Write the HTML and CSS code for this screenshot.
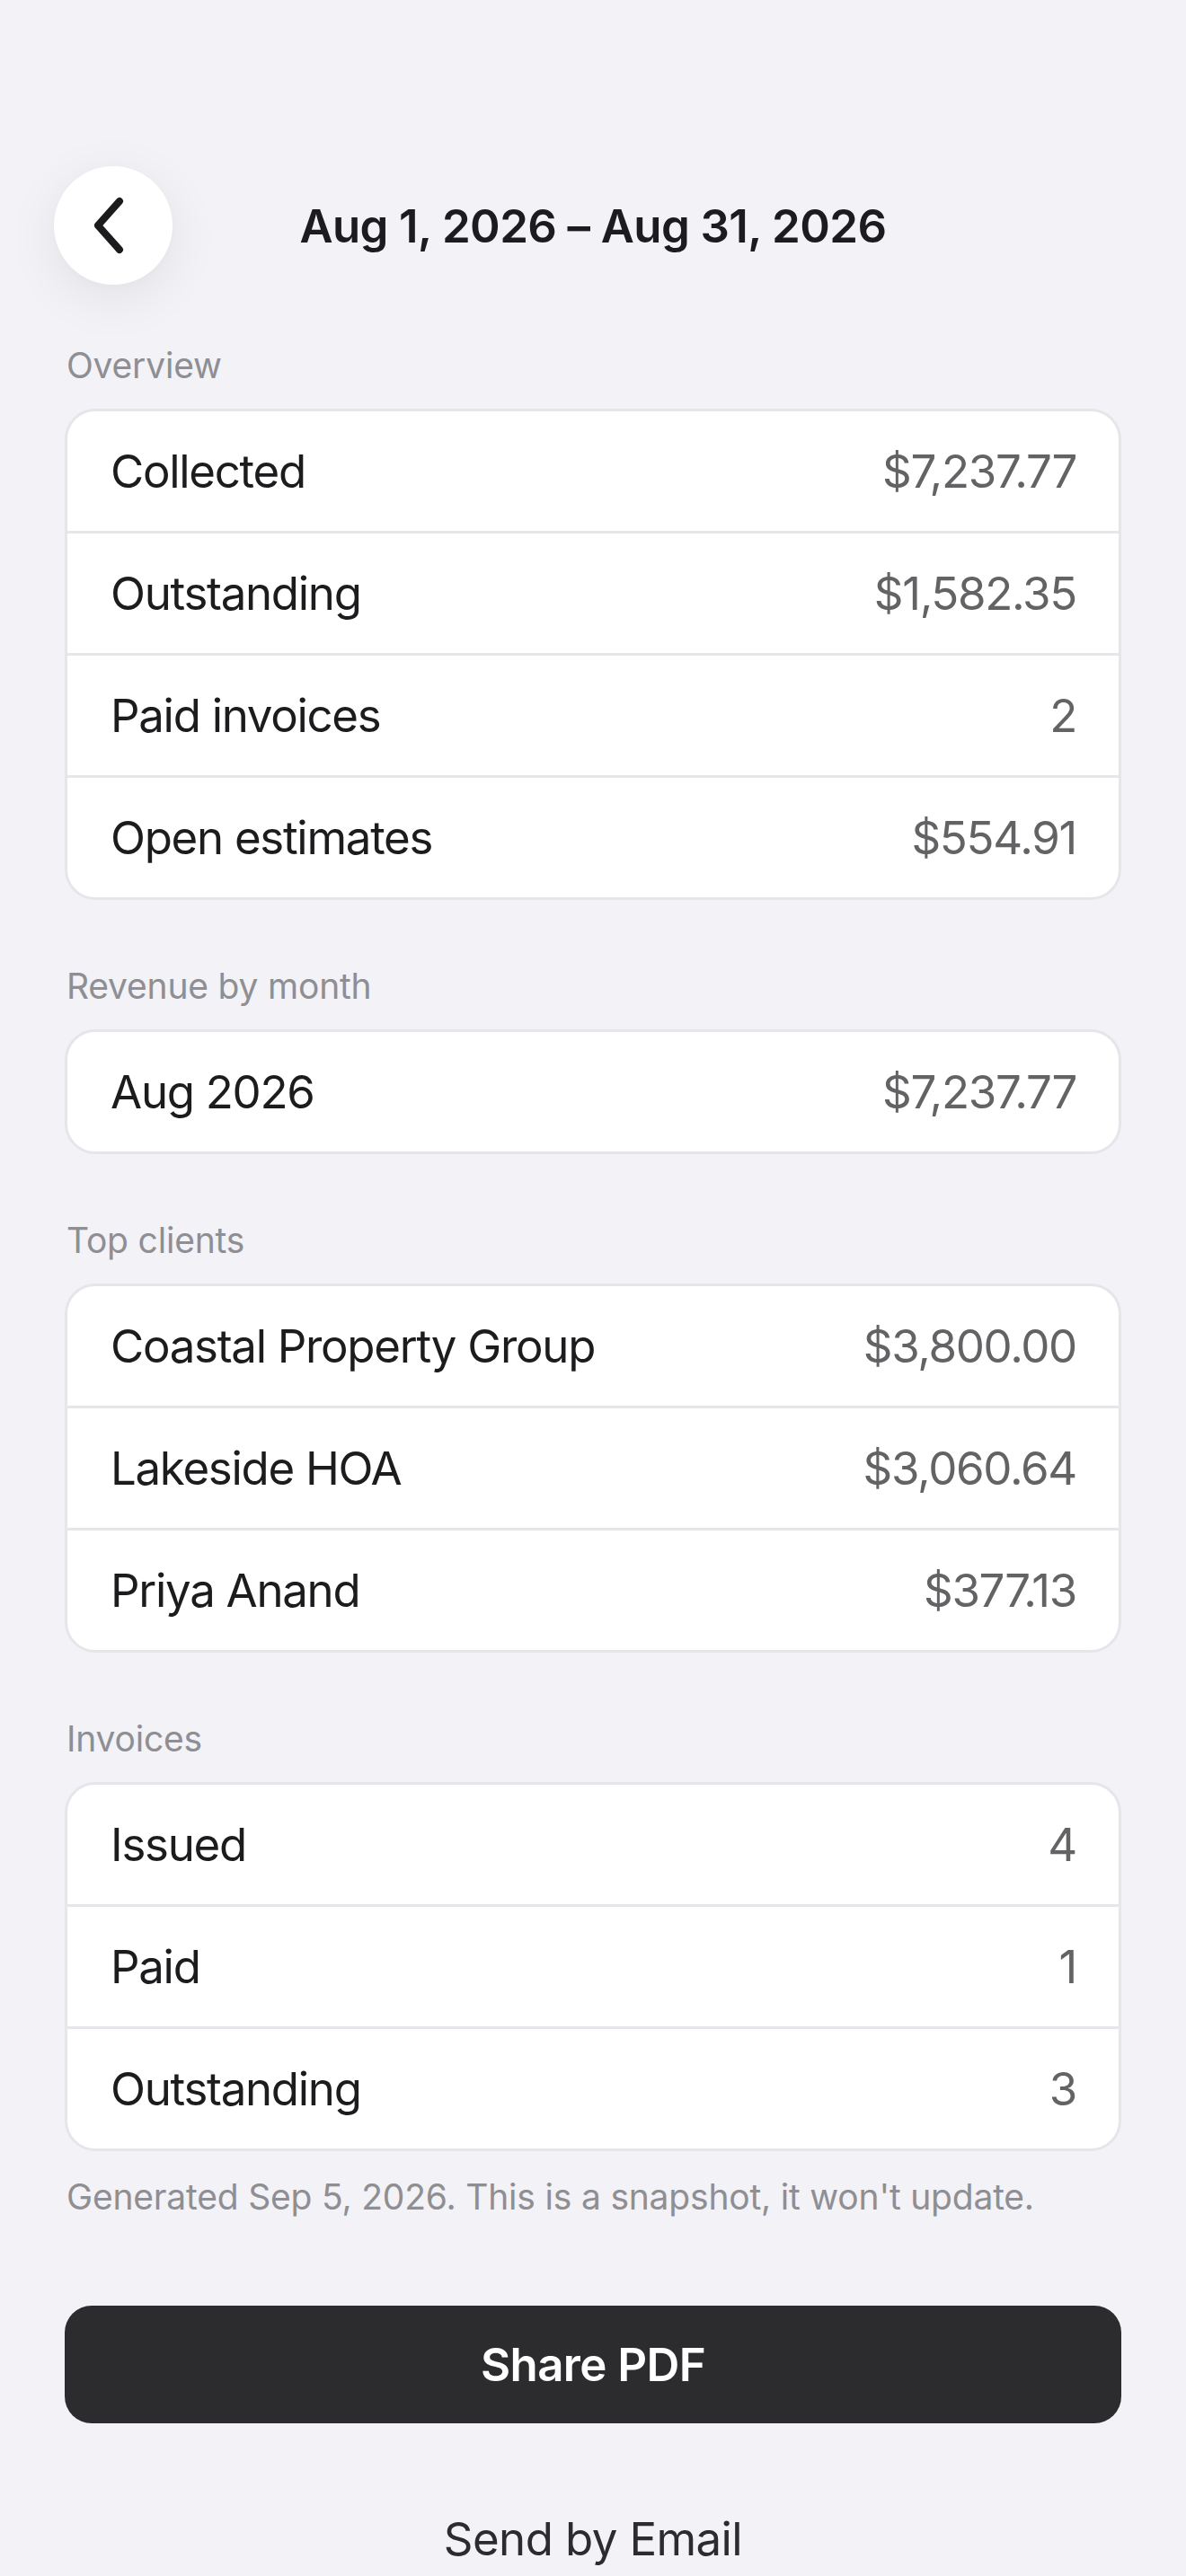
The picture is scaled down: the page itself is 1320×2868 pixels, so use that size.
FILE: index.html
```html
<!DOCTYPE html>
<html lang="en">
<head>
<meta charset="utf-8">
<title>Report</title>
<link rel="stylesheet" href="styles.css">
</head>
<body>
<div class="page">
  <header class="header">
    <button class="back" aria-label="Back">
      <svg width="40" height="64" viewBox="0 0 40 64" fill="none">
        <path d="M30 5 L6 32 L30 59" stroke="#1c1c1e" stroke-width="8" stroke-linecap="round" stroke-linejoin="round"/>
      </svg>
    </button>
    <h1 class="title">Aug 1, 2026 – Aug 31, 2026</h1>
    <div class="spacer"></div>
  </header>

  <section class="section first">
    <div class="label">Overview</div>
    <div class="card">
      <div class="row"><span class="k">Collected</span><span class="v">$7,237.77</span></div>
      <div class="row"><span class="k">Outstanding</span><span class="v">$1,582.35</span></div>
      <div class="row"><span class="k">Paid invoices</span><span class="v">2</span></div>
      <div class="row"><span class="k">Open estimates</span><span class="v">$554.91</span></div>
    </div>
  </section>

  <section class="section">
    <div class="label">Revenue by month</div>
    <div class="card">
      <div class="row"><span class="k">Aug 2026</span><span class="v">$7,237.77</span></div>
    </div>
  </section>

  <section class="section">
    <div class="label">Top clients</div>
    <div class="card">
      <div class="row"><span class="k">Coastal Property Group</span><span class="v">$3,800.00</span></div>
      <div class="row"><span class="k">Lakeside HOA</span><span class="v">$3,060.64</span></div>
      <div class="row"><span class="k">Priya Anand</span><span class="v">$377.13</span></div>
    </div>
  </section>

  <section class="section">
    <div class="label">Invoices</div>
    <div class="card">
      <div class="row"><span class="k">Issued</span><span class="v">4</span></div>
      <div class="row"><span class="k">Paid</span><span class="v">1</span></div>
      <div class="row"><span class="k">Outstanding</span><span class="v">3</span></div>
    </div>
    <p class="note">Generated Sep 5, 2026. This is a snapshot, it won't update.</p>
  </section>

  <div class="actions">
    <button class="primary">Share PDF</button>
    <button class="secondary">Send by Email</button>
  </div>
</div>
</body>
</html>
```
FILE: styles.css
```css
* { box-sizing: border-box; }
html, body {
  margin: 0;
  padding: 0;
  background: #f2f2f7;
}
body {
  font-family: Inter, "Noto Sans", "Liberation Sans", sans-serif;
  color: #1c1c1e;
  -webkit-font-smoothing: antialiased;
}
.page {
  padding: 185px 72px 0 72px;
}
.header {
  display: grid;
  grid-template-columns: 132px 1fr 132px;
  align-items: center;
  margin: 0 -12px;
  height: 132px;
}
.back {
  width: 132px;
  height: 132px;
  border-radius: 50%;
  border: none;
  background: #ffffff;
  box-shadow: 0 14px 60px rgba(0, 0, 0, 0.075), 0 2px 10px rgba(0, 0, 0, 0.02);
  display: flex;
  align-items: center;
  justify-content: center;
  padding: 0 6px 0 0;
}
.title {
  margin: 0;
  text-align: center;
  font-size: 51px;
  font-weight: 600;
  letter-spacing: -0.6px;
  color: #1c1c1e;
}
.section { margin-top: 72px; }
.section.first { margin-top: 66px; }
.label {
  font-size: 39px;
  color: #8e8e93;
  padding-left: 2px;
  margin-bottom: 25px;
  letter-spacing: -0.2px;
}
.card {
  background: #ffffff;
  border: 3px solid #e5e5ea;
  border-radius: 34px;
  overflow: hidden;
}
.row {
  display: flex;
  justify-content: space-between;
  align-items: center;
  height: 136px;
  padding: 0 47px 0 48px;
  border-top: 3px solid #e5e5ea;
  font-size: 51px;
  letter-spacing: -1.3px;
}
.row:first-child {
  border-top: none;
  height: 133px;
}
.k { color: #1c1c1e; }
.v { color: #636366; }
.note {
  margin: 27px 0 0 0;
  padding-left: 2px;
  font-size: 39px;
  color: #8e8e93;
  letter-spacing: -0.2px;
}
.actions {
  display: flex;
  flex-direction: column;
  margin-top: 98px;
}
.primary {
  height: 131px;
  border: none;
  border-radius: 30px;
  background: #2c2c2e;
  color: #ffffff;
  font-family: inherit;
  font-size: 51px;
  font-weight: 600;
  letter-spacing: -0.6px;
}
.secondary {
  margin-top: 63px;
  height: 131px;
  border: none;
  background: transparent;
  color: #2c2c2e;
  font-family: inherit;
  font-size: 51px;
  letter-spacing: -0.6px;
}
```
